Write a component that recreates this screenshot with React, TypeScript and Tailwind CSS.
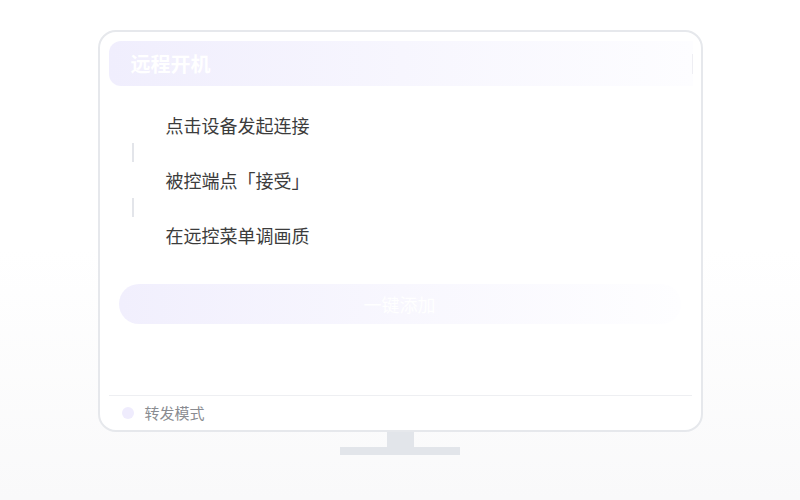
const steps = ["点击设备发起连接", "被控端点「接受」", "在远控菜单调画质"];

export default function App() {
  return (
    <div
      className="flex h-[500px] w-[800px] flex-col items-center bg-gradient-to-b from-white from-50% to-[#f9f9fa] pt-[30px]"
      style={{ fontFamily: '"Noto Sans CJK SC", "Noto Sans", sans-serif' }}
    >
      <div className="flex h-[402px] w-[605px] flex-col rounded-[18px] border-2 border-[#e6e8ec] bg-white pl-[9px] pr-[9px] pt-[9px]">
        <div className="flex h-[45px] w-[584px] items-center justify-between rounded-l-[12px] bg-gradient-to-r from-[#f0eefd] via-[#f7f6fe] to-[#fdfdff] pl-[22px]">
          <span className="text-[20px] font-bold leading-none text-white">远程开机</span>
          <span className="h-5 w-px bg-[#eeeef3]" />
        </div>

        <div className="mt-[27px] flex flex-col">
          {steps.map((s, i) => (
            <div key={s} className="flex flex-col">
              <div className="pl-[57px] text-[18px] leading-[24px] text-[#3c3c3c]">{s}</div>
              {i < steps.length - 1 && (
                <div className="my-[6px] ml-[23px] h-[19px] w-[2px] bg-[#e3e5ea]" />
              )}
            </div>
          ))}
        </div>

        <button className="ml-[10px] mt-[37px] flex h-[40px] w-[562px] items-center justify-center rounded-full bg-gradient-to-r from-[#f1effd] via-[#f8f7fe] to-[#fefeff] text-[18px] text-white">
          一键添加
        </button>

        <div className="mt-auto border-t border-[#eeeff2]">
          <div className="flex h-[34px] items-center gap-[11px] pl-[13px]">
            <span className="h-3 w-3 rounded-full bg-[#efecfd]" />
            <span className="text-[15px] text-[#8a8c91]">转发模式</span>
          </div>
        </div>
      </div>
      <div className="h-[15px] w-[27px] bg-[#e2e5ea]" />
      <div className="h-[8px] w-[120px] bg-[#e2e5ea]" />
    </div>
  );
}
